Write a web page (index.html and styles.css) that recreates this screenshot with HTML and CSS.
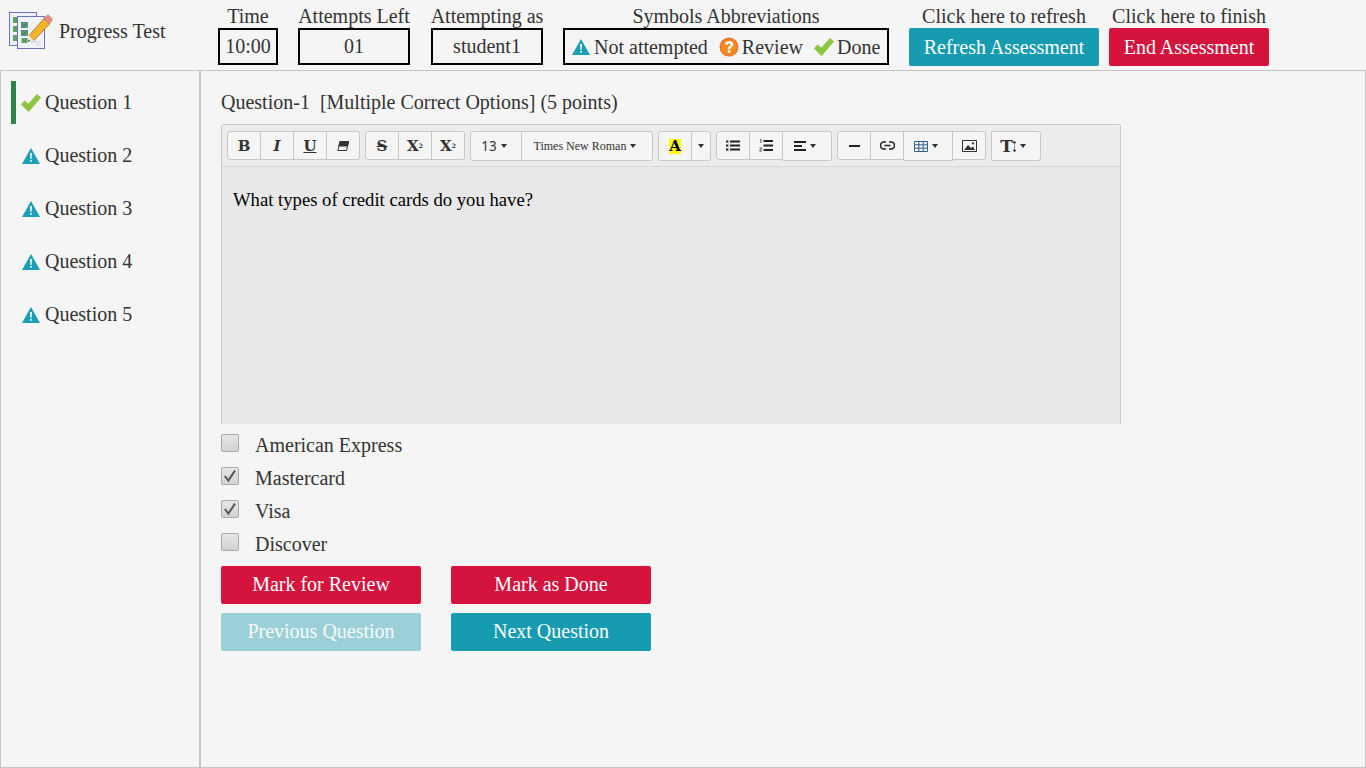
FILE: index.html
```html
<!DOCTYPE html>
<html lang="en">
<head>
	<meta charset="UTF-8">
	<title>Progress Test</title>
	<link rel="stylesheet" href="styles.css">
</head>
<body>
	<svg class="defs" width="0" height="0">
		<symbol id="warn" viewBox="0 0 18 16">
			<path d="M9 0 L18 16 L0 16 Z" fill="#1b9fb5"/>
			<path d="M8.1 5 H9.9 L9.6 11 H8.4 Z M8.2 12 H9.8 V13.8 H8.2 Z" fill="#fff"/>
		</symbol>
		<symbol id="tick" viewBox="0 0 20 18">
			<path d="M0 10.5 L3.6 6.5 L7.3 9.8 L16 0 L20 3.4 L7.6 18 Z" fill="#8cc63f"/>
		</symbol>
		<symbol id="help" viewBox="0 0 20 20">
			<circle cx="10" cy="10" r="9.5" fill="#f0782a"/>
			<circle cx="10" cy="10" r="7.6" fill="#f58a1f"/>
			<path d="M5.8 7.6 C6 2.8 14.2 2.6 14.4 7.6 C14.4 10.2 11.4 10 11.4 12.2 H8.8 C8.7 9.2 11.5 9.2 11.5 7.7 C11.4 6.2 8.9 6.2 8.7 7.9 Z M8.8 13.2 H11.4 V15.8 H8.8 Z" fill="#fff"/>
		</symbol>
		<symbol id="mark" viewBox="0 0 18 18">
			<path d="M3.8 9 L7.4 13.6 L14 3.6" fill="none" stroke="#555" stroke-width="2"/>
		</symbol>
	</svg>

	<header class="top">
		<div class="brand">
			<svg class="logo" viewBox="0 0 44 38" width="44" height="38">
				<rect x="0.5" y="0.5" width="27" height="33" fill="#eef0f8" stroke="#6f72b4"/>
				<rect x="4" y="5" width="5" height="6" fill="#5aa469"/>
				<rect x="4" y="14" width="5" height="6" fill="#5aa469"/>
				<rect x="4" y="23" width="5" height="6" fill="#5aa469"/>
				<rect x="8.5" y="4.5" width="27" height="32" fill="#f1f2fa" stroke="#6f72b4"/>
				<rect x="12.5" y="10.5" width="6" height="5" fill="#5aa469" stroke="#2f6f6f" stroke-width="0.7"/>
				<path d="M14 13 L15 14.2 L17 11.8" fill="none" stroke="#1f4f5f" stroke-width="0.7"/>
				<rect x="12.5" y="18.5" width="6" height="5" fill="#5aa469" stroke="#2f6f6f" stroke-width="0.7"/>
				<path d="M14 21 L15 22.2 L17 19.8" fill="none" stroke="#1f4f5f" stroke-width="0.7"/>
				<rect x="12.5" y="26" width="6" height="5" fill="#5aa469"/>
				<path d="M22 30 H32 M27 33 H32" stroke="#c9cbe3" stroke-width="1.2"/>
				<path d="M35 6.5 L40.5 12 L25 28.5 L20 23.5 Z" fill="#f4b42a" stroke="#8a6a2b" stroke-width="0.7"/>
				<path d="M20 23.5 L25 28.5 L19 29.8 Z" fill="#f7e3bf"/>
				<path d="M19.8 27.4 L21.2 29 L19 29.8 Z" fill="#333"/>
				<path d="M35 6.5 L38 3.3 Q39 2.6 40 3.4 L43 6.4 Q43.6 7.4 43 8.5 L40.5 12 Z" fill="#ea8c8c" stroke="#b86a6a" stroke-width="0.5"/>
			</svg>
			<span>Progress Test</span>
		</div>
		<div class="stat stat-time">
			<div class="stat-label">Time</div>
			<div class="stat-box">10:00</div>
		</div>
		<div class="stat stat-attempts">
			<div class="stat-label">Attempts Left</div>
			<div class="stat-box">01</div>
		</div>
		<div class="stat stat-user">
			<div class="stat-label">Attempting as</div>
			<div class="stat-box">student1</div>
		</div>
		<div class="stat stat-symbols">
			<div class="stat-label">Symbols Abbreviations</div>
			<div class="stat-box symbols">
				<svg class="ico-warn"><use href="#warn"/></svg><span>Not attempted</span>
				<svg class="ico-help"><use href="#help"/></svg><span>Review</span>
				<svg class="ico-tick"><use href="#tick"/></svg><span>Done</span>
			</div>
		</div>
		<div class="stat stat-refresh">
			<div class="stat-label">Click here to refresh</div>
			<button class="btn teal top-btn">Refresh Assessment</button>
		</div>
		<div class="stat stat-end">
			<div class="stat-label">Click here to finish</div>
			<button class="btn red top-btn">End Assessment</button>
		</div>
	</header>

	<div class="body">
		<nav class="side">
			<a class="q-item active"><svg class="ico-tick"><use href="#tick"/></svg>Question 1</a>
			<a class="q-item"><svg class="ico-warn"><use href="#warn"/></svg>Question 2</a>
			<a class="q-item"><svg class="ico-warn"><use href="#warn"/></svg>Question 3</a>
			<a class="q-item"><svg class="ico-warn"><use href="#warn"/></svg>Question 4</a>
			<a class="q-item"><svg class="ico-warn"><use href="#warn"/></svg>Question 5</a>
		</nav>

		<main class="main">
			<div class="q-title">Question-1&nbsp; [Multiple Correct Options] (5 points)</div>

			<div class="editor">
				<div class="toolbar">
					<div class="group">
						<span class="tb tb-b">B</span>
						<span class="tb tb-i">I</span>
						<span class="tb tb-u">U</span>
						<span class="tb"><svg width="12" height="10" viewBox="0 0 12 10"><path d="M3 .5 H11.5 L9.5 9.5 H.8 Z" fill="#f5f5f5" stroke="#333"/><path d="M3 .5 H11.5 L10.6 5 H2 Z" fill="#333" stroke="#333"/></svg></span>
					</div>
					<div class="group">
						<span class="tb tb-s">S</span>
						<span class="tb tb-x">X<sup>2</sup></span>
						<span class="tb tb-x">X<sub>2</sub></span>
					</div>
					<div class="group tall">
						<span class="tb tb-size">13<i class="caret"></i></span>
						<span class="tb tb-font">Times New Roman<i class="caret"></i></span>
					</div>
					<div class="group tall">
						<span class="tb"><span class="tb-color">A</span></span>
						<span class="tb tb-more"><i class="caret big"></i></span>
					</div>
					<div class="group">
						<span class="tb"><svg width="14" height="11" viewBox="0 0 14 11"><path d="M4 1.5 H14 M4 5.5 H14 M4 9.5 H14 M0 1.5 H2.4 M0 5.5 H2.4 M0 9.5 H2.4" stroke="#222" stroke-width="2"/></svg></span>
						<span class="tb"><svg width="14" height="13" viewBox="0 0 14 13"><path d="M4.5 2 H14 M4.5 6.5 H14 M4.5 11 H14" stroke="#222" stroke-width="2"/><path d="M1 1 L2 .5 V4 M.5 9 H3 L.5 12 H3" fill="none" stroke="#333" stroke-width=".8"/></svg></span>
						<span class="tb tb-align tall-cell"><svg width="12" height="10" viewBox="0 0 12 10"><path d="M0 1 H12 M0 5 H8 M0 9 H12" stroke="#222" stroke-width="2"/></svg><i class="caret"></i></span>
					</div>
					<div class="group">
						<span class="tb"><svg width="11" height="2" viewBox="0 0 11 2"><path d="M0 1 H11" stroke="#222" stroke-width="2"/></svg></span>
						<span class="tb"><svg width="15" height="9" viewBox="0 0 15 9"><path d="M6 1 H4 A3.2 3.2 0 0 0 4 8 H6 M9 1 H11 A3.2 3.2 0 0 1 11 8 H9 M4.5 4.5 H10.5" fill="none" stroke="#222" stroke-width="1.6"/></svg></span>
						<span class="tb tb-table tall-cell"><svg width="14" height="11" viewBox="0 0 14 11"><path d="M.5 .5 H13.5 V10.5 H.5 Z M.5 3.8 H13.5 M.5 7.2 H13.5 M4.8 .5 V10.5 M9.2 .5 V10.5" fill="none" stroke="#2f5f8f" stroke-width="1"/></svg><i class="caret"></i></span>
						<span class="tb"><svg width="15" height="12" viewBox="0 0 15 12"><path d="M.5 .5 H14.5 V11.5 H.5 Z" fill="none" stroke="#333"/><path d="M2 10 L6 5 L9 8 L11 6.5 L13 10 Z" fill="#333"/><circle cx="11" cy="3.4" r="1.1" fill="#333"/></svg></span>
					</div>
					<div class="group tall">
						<span class="tb tb-height">T<svg width="3" height="11" viewBox="0 0 3 11"><path d="M1.5 0 L3 2 H0 Z M1.5 11 L0 9 H3 Z M1.5 1 V10" fill="#333" stroke="#333" stroke-width=".5"/></svg><i class="caret"></i></span>
					</div>
				</div>
				<div class="note">What types of credit cards do you have?</div>
			</div>

			<ul class="options">
				<li><span class="check"></span>American Express</li>
				<li><span class="check"><svg width="18" height="18"><use href="#mark"/></svg></span>Mastercard</li>
				<li><span class="check"><svg width="18" height="18"><use href="#mark"/></svg></span>Visa</li>
				<li><span class="check"></span>Discover</li>
			</ul>

			<div class="actions">
				<button class="btn red">Mark for Review</button>
				<button class="btn red">Mark as Done</button>
				<button class="btn teal off">Previous Question</button>
				<button class="btn teal">Next Question</button>
			</div>
		</main>
	</div>
</body>
</html>
```

FILE: styles.css
```css
*{margin:0;padding:0;box-sizing:border-box;}
html,body{height:100%;}
body{background:#f5f5f5;color:#333;font:20px/1.15 "Liberation Serif","Times New Roman",serif;display:flex;flex-direction:column;overflow:hidden;}
ul,li{list-style:none;}
.defs{position:absolute;}

/* header */
.top{display:flex;height:71px;flex:none;border-bottom:1px solid #c4c4c4;padding:5px 0 0 0;}
.brand{display:flex;align-items:center;width:218px;padding:0 0 13px 9px;gap:6px;}
.logo{flex:none;}
.stat{display:flex;flex-direction:column;align-items:center;margin-right:20px;}
.stat-label{height:23px;line-height:23px;white-space:nowrap;}
.stat-box{height:37px;width:100%;border:2px solid #000;display:flex;align-items:center;justify-content:center;}
.stat-time{width:60px;}
.stat-attempts{width:112px;margin-right:21px;}
.stat-user{width:112px;}
.stat-symbols{width:326px;}
.stat-refresh{width:190px;margin-right:10px;}
.stat-end{width:160px;}
.symbols{justify-content:flex-start;padding:1px 0 0 7px;}
.symbols svg{flex:none;}
.symbols .ico-warn{margin-right:4px;}
.symbols .ico-help{margin:0 3px 0 11px;}
.symbols .ico-tick{margin:0 3px 0 11px;}
.ico-warn{width:18px;height:16px;}
.ico-help{width:20px;height:20px;}
.ico-tick{width:20px;height:18px;}

/* buttons */
.btn{border:0;border-radius:2px;color:#fff;font:inherit;height:38px;width:200px;}
.top-btn{width:100%;}
.teal{background:#169bb1;}
.red{background:#d5143e;}
.off{opacity:.4;}

/* sidebar */
.body{display:flex;flex:1;min-height:0;}
.side{width:201px;flex:none;border-left:1px solid #c4c4c4;border-right:2px solid #c4c4c4;border-bottom:1px solid #c4c4c4;padding:10px 0 0 10px;}
.q-item{display:flex;align-items:center;height:43px;margin-bottom:10px;padding:0 0 0 5px;border-left:5px solid transparent;gap:3px;}
.q-item .ico-warn{margin-left:1px;margin-right:2px;}
.q-item.active{border-left-color:#2a8547;gap:4px;}

/* main */
.main{flex:1;padding:20px 0 0 20px;border-right:1px solid #c4c4c4;border-bottom:1px solid #c4c4c4;}
.q-title{height:33px;line-height:23px;}
.editor{width:900px;height:300px;border:1px solid #c9c9c9;border-bottom:0;border-radius:3px 3px 0 0;background:#e8e8e8;display:flex;flex-direction:column;}
.toolbar{height:42px;flex:none;border-bottom:1px solid #d8d8d8;background:#ececec;display:flex;gap:5px;padding:6px 0 0 5px;align-items:flex-start;}
.group{display:flex;height:29px;}
.group.tall{height:30px;}
.tb{width:33px;height:100%;flex:none;background:#f5f5f5;border:1px solid #c8c8c8;border-left-width:0;display:flex;align-items:center;justify-content:center;color:#333;font:bold 15px "DejaVu Serif",serif;}
.tb:first-child{border-left-width:1px;border-radius:3px 0 0 3px;width:34px;}
.tb:last-child{border-radius:0 3px 3px 0;}
.tb-i{font-style:italic;}
.tb-u{text-decoration:underline;}
.tb-s{text-decoration:line-through;}
.tb sup,.tb sub{font-size:6px;line-height:0;}
.tb-size{width:52px!important;padding-right:4px;font:13.5px "Noto Sans",sans-serif;}
.tb-font{width:131px;padding-right:4px;font:normal 12px "Liberation Serif",serif;}
.tb-color{background:#ff0;width:12px;height:15px;line-height:15px;text-align:center;color:#000;font-size:15px;}
.tb-more{width:19px;}
.tb-align{width:49px;height:30px;padding-right:4px;}
.tb-table{width:49px;height:30px;padding-right:5px;}
.tb-height{width:50px!important;padding-right:6px;font-size:17px;border-radius:3px;}
.caret{display:inline-block;margin-left:4px;border:3px solid transparent;border-top:4px solid #333;border-bottom:0;}
.caret.big{margin-left:0;}
.note{flex:1;padding:22px 11px;color:#000;font-size:18.67px;line-height:21px;}

/* options */
.options{margin-top:5px;}
.options li{height:33px;display:flex;align-items:center;padding-left:34px;position:relative;}
.check{position:absolute;left:0;top:5px;width:18px;height:18px;border:1px solid #aaa;border-radius:2px;background:linear-gradient(#e6e6e6,#d2d2d2);}
.check svg{display:block;margin:-1px;}

/* actions */
.actions{display:grid;grid-template-columns:200px 200px;column-gap:30px;row-gap:9px;margin-top:5px;}
.actions .btn{padding-bottom:2px;}
```
